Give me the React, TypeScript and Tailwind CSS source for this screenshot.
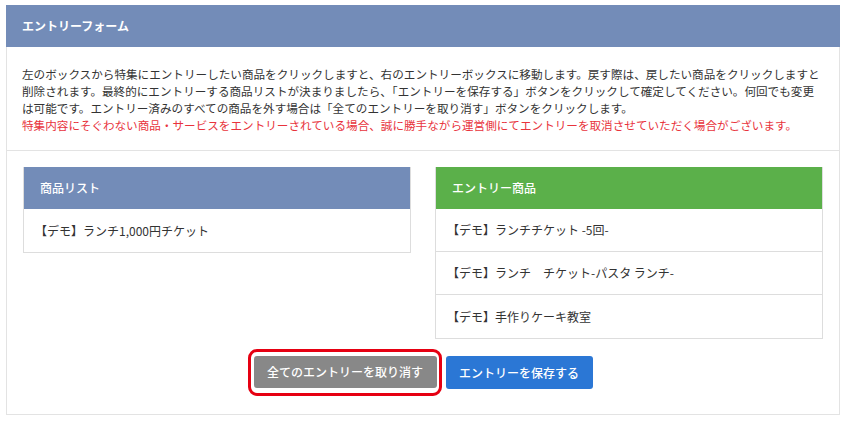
const products = ['【デモ】ランチ1,000円チケット'];

const entries = [
  '【デモ】ランチチケット -5回-',
  '【デモ】ランチ　チケット-パスタ ランチ-',
  '【デモ】手作りケーキ教室',
];

function ListBox({ title, items, head }: { title: string; items: string[]; head: string }) {
  return (
    <div className="flex-1 border border-[#dddddd] border-t-0">
      <div className={`h-[42px] flex items-center px-[16px] text-[12px] font-medium text-white ${head}`}>{title}</div>
      {items.map((item, i) => (
        <div
          key={item}
          className={`h-[43px] flex items-center px-[11px] text-[12px] text-[#333] ${i < items.length - 1 ? 'border-b border-[#dddddd]' : ''}`}
        >
          {item}
        </div>
      ))}
    </div>
  );
}

export default function App() {
  return (
    <div
      className="w-[850px] h-[423px] bg-white pt-[5px] px-[6px]"
      style={{ fontFamily: '"Noto Sans CJK JP", "Noto Sans", sans-serif' }}
    >
      <div className="w-[834px] border border-[#e3e3e3] border-t-0">
        <div className="h-[42px] -mx-px bg-[#738cb8] flex items-center px-[16px] text-[12px] font-bold text-white">
          エントリーフォーム
        </div>

        <div className="px-[15px] pt-[19px] pb-[16px] text-[11.6px] leading-[17px] text-[#333] border-b border-[#e3e3e3]">
          <p>
            左のボックスから特集にエントリーしたい商品をクリックしますと、右のエントリーボックスに移動します。戻す際は、戻したい商品をクリックしますと削除されます。最終的にエントリーする商品リストが決まりましたら、「エントリーを保存する」ボタンをクリックして確定してください。何回でも変更
            <br />
            は可能です。エントリー済みのすべての商品を外す場合は「全てのエントリーを取り消す」ボタンをクリックします。
          </p>
          <p className="text-[#e8333c]">
            特集内容にそぐわない商品・サービスをエントリーされている場合、誠に勝手ながら運営側にてエントリーを取消させていただく場合がございます。
          </p>
        </div>

        <div className="px-[16px] pt-[16px] pb-[25px]">
          <div className="flex items-start gap-[24px]">
            <ListBox title="商品リスト" items={products} head="bg-[#738cb8]" />
            <ListBox title="エントリー商品" items={entries} head="bg-[#5bb04a]" />
          </div>

          <div className="flex justify-center gap-[9px] mt-[17px]">
            <div className="relative">
              <button className="w-[183px] h-[32px] rounded-[3px] bg-[#888888] text-white text-[12px] font-medium">
                全てのエントリーを取り消す
              </button>
              <div className="absolute -left-[6px] -right-[5px] -top-[7px] -bottom-[7px] border-[3px] border-[#e60012] rounded-[9px] pointer-events-none" />
            </div>
            <button className="w-[147px] h-[33px] rounded-[3px] bg-[#2b77d5] text-white text-[12px] font-medium">
              エントリーを保存する
            </button>
          </div>
        </div>
      </div>
    </div>
  );
}
